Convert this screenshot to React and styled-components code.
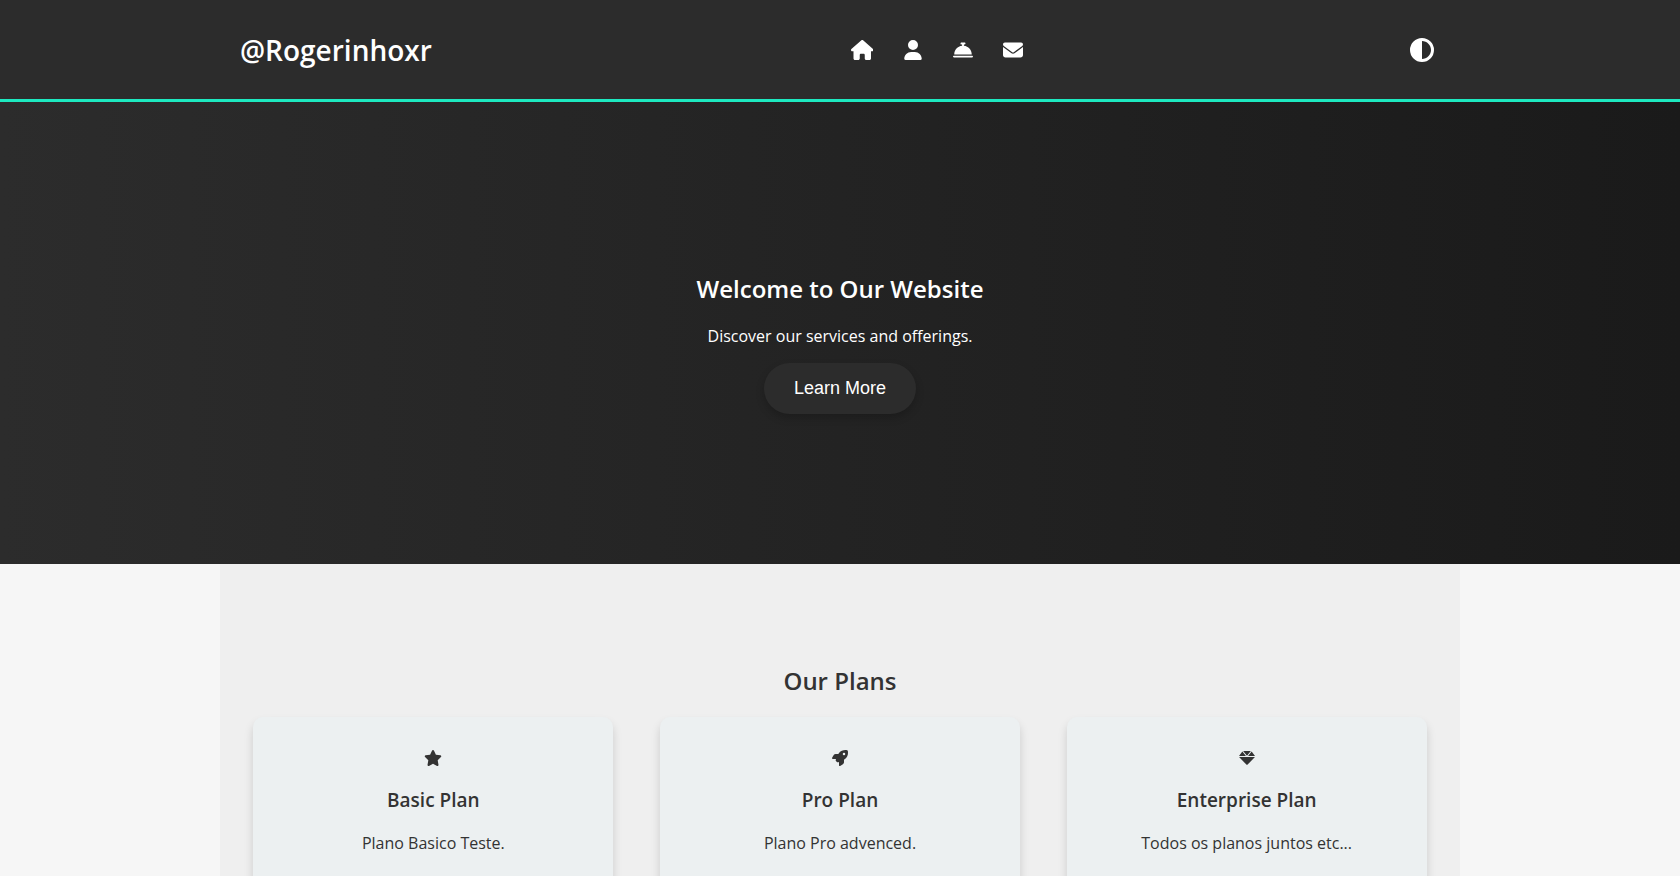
import React from "react";
import styled, { createGlobalStyle } from "styled-components";
import {
  FaUser,
  FaBellConcierge,
  FaEnvelope,
  FaCircleHalfStroke,
  FaRocket,
} from "react-icons/fa6";

const GlobalStyle = createGlobalStyle`
  body {
    margin: 0;
    background: #f6f6f6;
    color: #333;
    font-family: "Open Sans", sans-serif;
    font-size: 16px;
    line-height: 22px;
  }
`;

const Header = styled.header`
  background: #2c2c2c;
  border-bottom: 3px solid #1de9c0;
`;

const HeaderInner = styled.div`
  box-sizing: border-box;
  max-width: 1240px;
  min-height: 99px;
  margin: 0 auto;
  padding: 20px;
  display: flex;
  align-items: center;
  justify-content: space-between;
`;

const Logo = styled.h1`
  margin: 0;
  color: #fff;
  font-size: 28px;
  font-weight: 600;
  line-height: 42px;
`;

const NavList = styled.ul`
  display: flex;
  align-items: center;
  gap: 30px;
  margin: 0;
  padding: 0 16px 0 54px;
  list-style: none;
`;

const NavLink = styled.a`
  display: flex;
  color: #fff;
  font-size: 20px;

  svg {
    width: auto;
    height: 20px;
  }
`;

const ThemeToggle = styled.button`
  display: flex;
  padding: 0 6px;
  border: 0;
  background: none;
  color: #fff;
  font-size: 24px;
  cursor: pointer;
`;

const Hero = styled.section`
  padding: 150px 20px;
  background: linear-gradient(90deg, #2c2c2c, #1a1a1a);
  color: #fff;
  text-align: center;
`;

const SectionTitle = styled.h2`
  margin: 20px 0;
  font-size: 24px;
  font-weight: 600;
  line-height: 33px;
`;

const Text = styled.p`
  margin: 0 0 16px;
`;

const HeroButton = styled.button`
  padding: 15px 30px;
  border: 0;
  border-radius: 30px;
  background: #2c2c2c;
  box-shadow: 0 4px 8px rgba(0, 0, 0, 0.2);
  color: #fff;
  font-family: "Liberation Sans", Arial, sans-serif;
  font-size: 18px;
  line-height: 21px;
  cursor: pointer;
`;

const Plans = styled.section`
  box-sizing: border-box;
  max-width: 1240px;
  margin: 0 auto;
  padding: 80px 20px;
  display: flow-root;
  background: #efefef;
  text-align: center;
`;

const PlanGrid = styled.div`
  display: grid;
  grid-template-columns: repeat(auto-fit, minmax(300px, 1fr));
  gap: 20px;
`;

const PlanCard = styled.article`
  box-sizing: border-box;
  width: 100%;
  max-width: 360px;
  justify-self: center;
  padding: 30px;
  border-radius: 10px;
  background: #ecf0f1;
  box-shadow: 0 6px 10px rgba(0, 0, 0, 0.15);
`;

const PlanIcon = styled.div`
  display: flex;
  align-items: center;
  justify-content: center;
  height: 22px;

  svg {
    width: auto;
    height: 16px;
  }
`;

const PlanName = styled.h3`
  margin: 19px 0;
  font-size: 19px;
  font-weight: 600;
  line-height: 25px;
`;

function HouseIcon() {
  return (
    <svg viewBox="0 0 576 512" fill="currentColor" aria-hidden="true">
      <path d="M575.8 255.5C575.8 273.5 560.8 287.6 543.8 287.6H511.8L512.5 447.7C512.5 450.5 512.3 453.1 512 455.8V472C512 494.1 494.1 512 472 512H392C369.9 512 352 494.1 352 472V384C352 366.3 337.7 352 320 352H256C238.3 352 224 366.3 224 384V472C224 494.1 206.1 512 184 512H104C81.91 512 64 494.1 64 472V287.6H32.05C14.02 287.6 0 273.5 0 255.5C0 246.5 3.004 238.5 10.01 231.5L266.4 8.016C273.4 1.002 281.4 0 288.4 0C295.4 0 303.4 2.004 309.5 7.014L564.8 231.5C572.8 238.5 576.9 246.5 575.8 255.5z" />
    </svg>
  );
}

function StarIcon() {
  return (
    <svg viewBox="0 0 576 512" fill="currentColor" aria-hidden="true">
      <path d="M381.2 150.3L524.9 171.5C536.8 173.2 546.8 181.6 550.6 193.1C554.4 204.7 551.3 217.3 542.7 225.9L438.5 328.1L463.1 474.7C465.1 486.7 460.2 498.9 450.2 506C440.3 513.1 427.2 514 416.5 508.3L288.1 439.8L159.8 508.3C149 514 135.9 513.1 126 506C116.1 498.9 111.1 486.7 113.2 474.7L137.8 328.1L33.58 225.9C24.97 217.3 21.91 204.7 25.69 193.1C29.46 181.6 39.43 173.2 51.42 171.5L195 150.3L259.4 17.97C264.7 6.995 275.8 0 288.1 0C300.4 0 311.5 6.995 316.8 17.97L381.2 150.3z" />
    </svg>
  );
}

function GemIcon() {
  return (
    <svg viewBox="0 0 512 512" fill="currentColor" aria-hidden="true">
      <path d="M378.7 32H133.3L256 182.7L378.7 32zM512 192l-107.4-141.3L289.6 192H512zM107.4 50.67L0 192h222.4L107.4 50.67zM244.3 474.9C247.3 478.2 251.6 480 256 480s8.653-1.828 11.67-5.062L510.6 224H1.365L244.3 474.9z" />
    </svg>
  );
}

const navItems = [
  { label: "Home", href: "#home", Icon: HouseIcon },
  { label: "About", href: "#about", Icon: FaUser },
  { label: "Services", href: "#services", Icon: FaBellConcierge },
  { label: "Contact", href: "#contact", Icon: FaEnvelope },
];

const plans = [
  { name: "Basic Plan", text: "Plano Basico Teste.", Icon: StarIcon },
  { name: "Pro Plan", text: "Plano Pro advenced.", Icon: FaRocket },
  { name: "Enterprise Plan", text: "Todos os planos juntos etc...", Icon: GemIcon },
];

export default function App() {
  return (
    <>
      <GlobalStyle />
      <Header>
        <HeaderInner>
          <Logo>@Rogerinhoxr</Logo>
          <nav>
            <NavList>
              {navItems.map(({ label, href, Icon }) => (
                <li key={label}>
                  <NavLink href={href} aria-label={label}>
                    <Icon />
                  </NavLink>
                </li>
              ))}
            </NavList>
          </nav>
          <ThemeToggle type="button" aria-label="Toggle theme">
            <FaCircleHalfStroke />
          </ThemeToggle>
        </HeaderInner>
      </Header>
      <main>
        <Hero id="home">
          <SectionTitle>Welcome to Our Website</SectionTitle>
          <Text>Discover our services and offerings.</Text>
          <HeroButton type="button">Learn More</HeroButton>
        </Hero>
        <Plans id="services">
          <SectionTitle>Our Plans</SectionTitle>
          <PlanGrid>
            {plans.map(({ name, text, Icon }) => (
              <PlanCard key={name}>
                <PlanIcon>
                  <Icon />
                </PlanIcon>
                <PlanName>{name}</PlanName>
                <Text>{text}</Text>
              </PlanCard>
            ))}
          </PlanGrid>
        </Plans>
      </main>
    </>
  );
}
